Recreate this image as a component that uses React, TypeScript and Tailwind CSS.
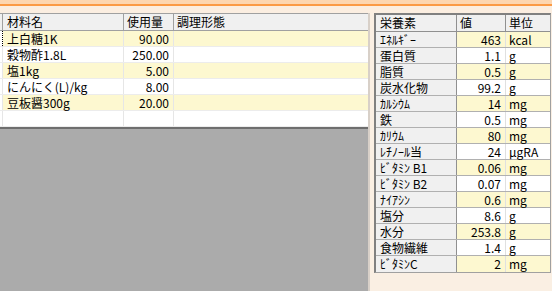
import React from "react";

const font = { fontFamily: '"MS UI Gothic", "Noto Sans CJK JP", "Liberation Sans", sans-serif' };

const ingredients = [
  { name: "上白糖1K", qty: "90.00" },
  { name: "穀物酢1.8L", qty: "250.00" },
  { name: "塩1kg", qty: "5.00" },
  { name: "にんにく(L)/kg", qty: "8.00" },
  { name: "豆板醤300g", qty: "20.00" },
  { name: "", qty: "" },
];

const nutrients = [
  ["ｴﾈﾙｷﾞｰ", "463", "kcal"],
  ["蛋白質", "1.1", "g"],
  ["脂質", "0.5", "g"],
  ["炭水化物", "99.2", "g"],
  ["ｶﾙｼｳﾑ", "14", "mg"],
  ["鉄", "0.5", "mg"],
  ["ｶﾘｳﾑ", "80", "mg"],
  ["ﾚﾁﾉｰﾙ当", "24", "μgRA"],
  ["ﾋﾞﾀﾐﾝ B1", "0.06", "mg"],
  ["ﾋﾞﾀﾐﾝ B2", "0.07", "mg"],
  ["ﾅｲｱｼﾝ", "0.6", "mg"],
  ["塩分", "8.6", "g"],
  ["水分", "253.8", "g"],
  ["食物繊維", "1.4", "g"],
  ["ﾋﾞﾀﾐﾝC", "2", "mg"],
];

function IngredientTable() {
  return (
    <div className="flex flex-col bg-white border-t border-[#a0a0a0]">
      <div className="flex h-[17px] bg-[#f0f0f0] border-b border-[#a0a0a0] text-[12px] leading-[16px] text-black">
        <div className="w-[3px] border-r border-[#a0a0a0]" />
        <div className="w-[121px] pl-[4px] border-r border-[#a0a0a0]">材料名</div>
        <div className="w-[50px] pl-[3px] border-r border-[#a0a0a0]">使用量</div>
        <div className="flex-1 pl-[3px]">調理形態</div>
      </div>
      {ingredients.map((r, i) => (
        <div
          key={i}
          className={`flex h-[16px] border-b border-[#ececec] text-[12px] leading-[15px] text-black ${
            i % 2 === 0 && r.name ? "bg-[#fdf8d0]" : "bg-white"
          }`}
        >
          <div className={`w-[3px] bg-white border-r border-[#e6e6e6] ${i === 0 ? "border-dotted border-r-black" : ""}`} />
          <div className="w-[121px] pl-[4px] border-r border-[#e6e6e6] whitespace-nowrap">{r.name}</div>
          <div className="w-[50px] pr-[4px] text-right border-r border-[#e6e6e6]">{r.qty}</div>
          <div className="flex-1" />
        </div>
      ))}
    </div>
  );
}

function NutrientTable() {
  return (
    <div className="flex flex-col w-[177px] border-l-2 border-t-2 border-[#808080] border-r border-b border-r-[#a0a0a0] border-b-[#a0a0a0] bg-white">
      <div className="flex h-[17px] bg-[#f0f0f0] border-b border-[#909090] text-[12px] leading-[16px] text-black">
        <div className="w-[81px] pl-[4px] border-r border-[#909090]">栄養素</div>
        <div className="w-[49px] pl-[3px] border-r border-[#909090]">値</div>
        <div className="flex-1 pl-[3px]">単位</div>
      </div>
      {nutrients.map(([n, v, u], i) => (
        <div key={i} className="flex h-[16px] border-b border-[#b0b0b0] last:border-b-0 text-[12px] leading-[15px] text-black">
          <div className="w-[81px] pl-[4px] bg-[#f0f0f0] border-r border-[#909090] whitespace-nowrap">{n}</div>
          <div className={`w-[49px] pr-[4px] text-right border-r border-[#e0e0e0] ${i % 2 === 0 ? "bg-[#fdf8d0]" : "bg-white"}`}>{v}</div>
          <div className={`flex-1 pl-[3px] ${i % 2 === 0 ? "bg-[#fdf8d0]" : "bg-white"}`}>{u}</div>
        </div>
      ))}
    </div>
  );
}

export default function App() {
  return (
    <div className="w-[552px] h-[291px] overflow-hidden flex flex-col bg-[#faefe3]" style={font}>
      <div className="h-[4px] bg-[#fdd6b0]" />
      <div className="h-[2px] bg-[#fb9a45]" />
      <div className="h-[7px] bg-[#fbeee1]" />
      <div className="flex flex-1 min-h-0">
        <div className="w-[368px] flex flex-col">
          <IngredientTable />
          <div className="flex-1 bg-[#ababab] border-t-2 border-[#6e6e6e]" />
        </div>
        <div className="w-[2px] bg-[#d8d0c8]" />
        <div className="flex-1 pl-[4px]">
          <NutrientTable />
        </div>
      </div>
    </div>
  );
}
